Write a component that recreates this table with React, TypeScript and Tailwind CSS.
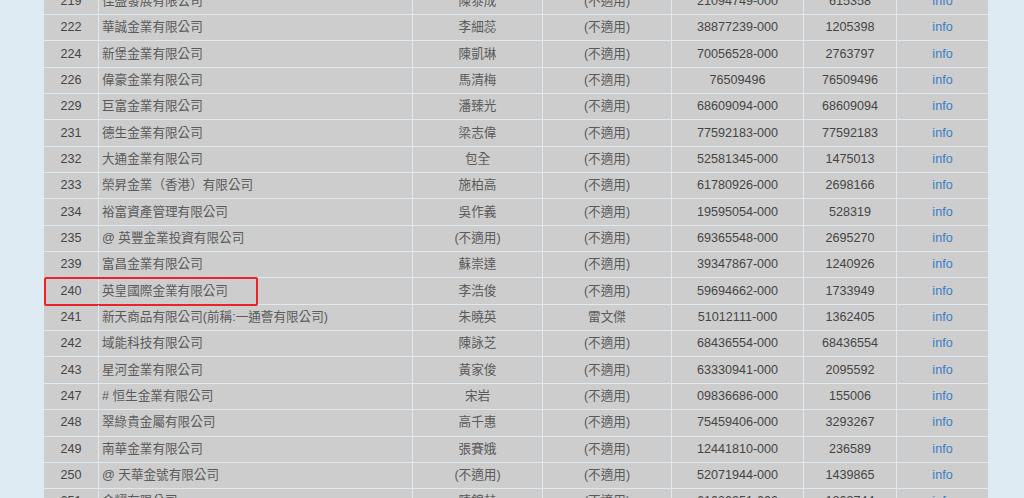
type Row = { no: string; name: string; rep: string; alt: string; br: string; reg: string }

const rows: Row[] = [
  { no: '219', name: '佳盛發展有限公司', rep: '陳泰成', alt: '(不適用)', br: '21094749-000', reg: '615358' },
  { no: '222', name: '華誠金業有限公司', rep: '李細蕊', alt: '(不適用)', br: '38877239-000', reg: '1205398' },
  { no: '224', name: '新堡金業有限公司', rep: '陳凱琳', alt: '(不適用)', br: '70056528-000', reg: '2763797' },
  { no: '226', name: '偉豪金業有限公司', rep: '馬清梅', alt: '(不適用)', br: '76509496', reg: '76509496' },
  { no: '229', name: '巨富金業有限公司', rep: '潘臻光', alt: '(不適用)', br: '68609094-000', reg: '68609094' },
  { no: '231', name: '德生金業有限公司', rep: '梁志偉', alt: '(不適用)', br: '77592183-000', reg: '77592183' },
  { no: '232', name: '大通金業有限公司', rep: '包全', alt: '(不適用)', br: '52581345-000', reg: '1475013' },
  { no: '233', name: '榮昇金業（香港）有限公司', rep: '施柏高', alt: '(不適用)', br: '61780926-000', reg: '2698166' },
  { no: '234', name: '裕富資產管理有限公司', rep: '吳作義', alt: '(不適用)', br: '19595054-000', reg: '528319' },
  { no: '235', name: '@ 英豐金業投資有限公司', rep: '(不適用)', alt: '(不適用)', br: '69365548-000', reg: '2695270' },
  { no: '239', name: '富昌金業有限公司', rep: '蘇崇達', alt: '(不適用)', br: '39347867-000', reg: '1240926' },
  { no: '240', name: '英皇國際金業有限公司', rep: '李浩俊', alt: '(不適用)', br: '59694662-000', reg: '1733949' },
  { no: '241', name: '新天商品有限公司(前稱:一通薈有限公司)', rep: '朱曉英', alt: '雷文傑', br: '51012111-000', reg: '1362405' },
  { no: '242', name: '域能科技有限公司', rep: '陳詠芝', alt: '(不適用)', br: '68436554-000', reg: '68436554' },
  { no: '243', name: '星河金業有限公司', rep: '黃家俊', alt: '(不適用)', br: '63330941-000', reg: '2095592' },
  { no: '247', name: '# 恒生金業有限公司', rep: '宋岩', alt: '(不適用)', br: '09836686-000', reg: '155006' },
  { no: '248', name: '翠綠貴金屬有限公司', rep: '高千惠', alt: '(不適用)', br: '75459406-000', reg: '3293267' },
  { no: '249', name: '南華金業有限公司', rep: '張賽娥', alt: '(不適用)', br: '12441810-000', reg: '236589' },
  { no: '250', name: '@ 天華金號有限公司', rep: '(不適用)', alt: '(不適用)', br: '52071944-000', reg: '1439865' },
  { no: '251', name: '金耀有限公司', rep: '陳錦赫', alt: '(不適用)', br: '61030351-000', reg: '1203744' },
]

const cell = 'flex items-center justify-center border-r border-[#dfeaf0] whitespace-nowrap'

export default function App() {
  return (
    <div
      className="h-[498px] w-[1024px] overflow-hidden bg-[#deebf2] text-[12.6px] text-[#454545]"
      style={{ fontFamily: '"Liberation Sans", Arial, "Noto Sans CJK TC", sans-serif' }}
    >
      <div className="ml-[44px] mt-[-11.35px] w-[944px] bg-[#cdcdcd]">
        {rows.map((r) => (
          <div
            key={r.no}
            className="relative grid h-[26.35px] grid-cols-[55px_314px_130px_129px_132px_93px_91px] border-b border-[#dfeaf0]"
          >
            <div className={cell}>{r.no}</div>
            <div className={cell + ' !justify-start pl-[3px] text-[#5a5a5a]'}>{r.name}</div>
            <div className={cell + ' text-[#5a5a5a]'}>{r.rep}</div>
            <div className={cell + ' text-[#5a5a5a]'}>{r.alt}</div>
            <div className={cell}>{r.br}</div>
            <div className={cell}>{r.reg}</div>
            <div className="flex items-center justify-center">
              <a href="#" className="text-[#3b7dc4]">info</a>
            </div>
            {r.no === '240' && (
              <div className="pointer-events-none absolute left-0 top-[-1px] h-[29px] w-[214px] rounded-[2px] border-2 border-[#e8232a]" />
            )}
          </div>
        ))}
      </div>
    </div>
  )
}
